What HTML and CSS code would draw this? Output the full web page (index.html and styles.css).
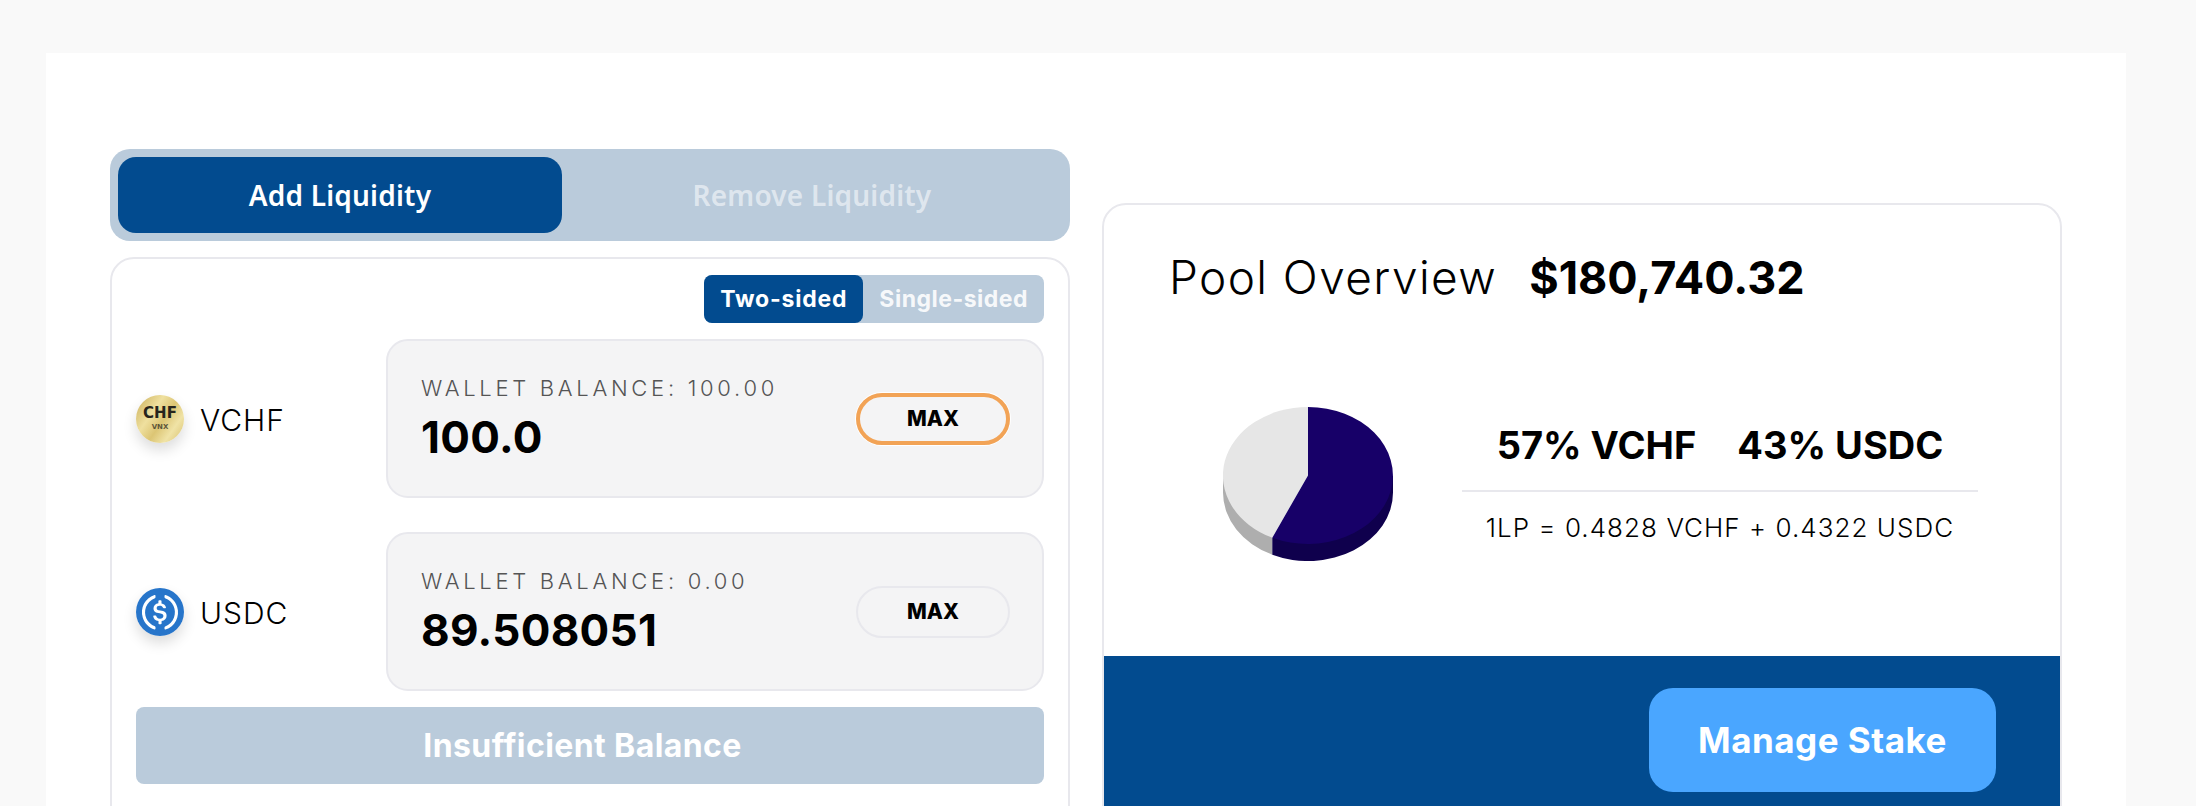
FILE: index.html
```html
<!DOCTYPE html>
<html lang="en">
<head>
<meta charset="utf-8">
<title>Pool</title>
<link rel="stylesheet" href="styles.css">
</head>
<body>
<main class="sheet">
  <section class="left">
    <div class="tabs">
      <div class="tab tab-on">Add Liquidity</div>
      <div class="tab tab-off">Remove Liquidity</div>
    </div>
    <div class="panel">
      <div class="mode-row">
        <div class="mode">
          <div class="mode-item mode-on">Two-sided</div>
          <div class="mode-item mode-off">Single-sided</div>
        </div>
      </div>
      <div class="token-row">
        <div class="token">
          <div class="coin coin-chf"><span class="chf">CHF</span><span class="vnx">VNX</span></div>
          <span class="token-name">VCHF</span>
        </div>
        <div class="box">
          <div class="box-text">
            <div class="label">WALLET BALANCE: 100.00</div>
            <div class="value">100.0</div>
          </div>
          <button class="max max-on">MAX</button>
        </div>
      </div>
      <div class="token-row">
        <div class="token">
          <div class="coin coin-usdc">
            <svg class="usdc" viewBox="0 0 2000 2000" aria-hidden="true">
              <circle cx="1000" cy="1000" r="1000" fill="#2775ca"/>
              <path fill="#fff" d="M1275 1158.33c0-145.83-87.5-195.83-262.5-216.66-125-16.67-150-50-150-108.34s41.67-95.83 125-95.83c75 0 116.67 25 137.5 87.5 4.17 12.5 16.67 20.83 29.17 20.83h66.66c16.67 0 29.17-12.5 29.17-29.16v-4.17c-16.67-91.67-91.67-162.5-187.5-170.83v-100c0-16.67-12.5-29.17-33.33-33.34h-62.5c-16.67 0-29.17 12.5-33.34 33.34v95.83c-125 16.67-204.16 100-204.16 204.17 0 137.5 83.33 191.66 258.33 212.5 116.67 20.83 154.17 45.83 154.17 112.5s-58.34 112.5-137.5 112.5c-108.34 0-145.84-45.84-158.34-108.34-4.16-16.66-16.66-25-29.16-25h-70.84c-16.66 0-29.16 12.5-29.16 29.17v4.17c16.66 104.16 83.33 179.16 220.83 200v100c0 16.66 12.5 29.16 33.33 33.33h62.5c16.67 0 29.17-12.5 33.34-33.33v-100c125-20.84 208.33-108.34 208.33-220.84z"/>
              <path fill="#fff" d="M787.5 1595.83c-325-116.66-491.67-479.16-370.83-800 62.5-175 200-308.33 370.83-370.83 16.67-8.33 25-20.83 25-41.67V325c0-16.67-8.33-29.17-25-33.33-4.17 0-12.5 0-16.67 4.16-395.83 125-612.5 545.84-487.5 941.67 75 233.33 254.17 412.5 487.5 487.5 16.67 8.33 33.34 0 37.5-16.67 4.17-4.16 4.17-8.33 4.17-16.66v-58.34c0-12.5-12.5-29.16-25-37.5zM1229.17 295.83c-16.67-8.33-33.34 0-37.5 16.67-4.17 4.17-4.17 8.33-4.17 16.67v58.33c0 16.67 12.5 33.33 25 41.67 325 116.66 491.67 479.16 370.83 800-62.5 175-200 308.33-370.83 370.83-16.67 8.33-25 20.83-25 41.67V1700c0 16.67 8.33 29.17 25 33.33 4.17 0 12.5 0 16.67-4.16 395.83-125 612.5-545.84 487.5-941.67-75-237.5-258.34-416.67-487.5-491.67z"/>
            </svg>
          </div>
          <span class="token-name">USDC</span>
        </div>
        <div class="box">
          <div class="box-text">
            <div class="label">WALLET BALANCE: 0.00</div>
            <div class="value">89.508051</div>
          </div>
          <button class="max">MAX</button>
        </div>
      </div>
      <button class="submit">Insufficient Balance</button>
    </div>
  </section>
  <section class="overview">
    <header class="ov-head">
      <span class="ov-title">Pool Overview</span>
      <span class="ov-total">$180,740.32</span>
    </header>
    <div class="ov-body">
      <svg class="pie" viewBox="0 0 170 154" aria-hidden="true">
        <path fill="#aeaeae" d="M0 68.5V85.5A85 68.5 0 0 0 49.3 147.7V130.7Z"/>
        <path fill="#0f004d" d="M49.3 130.7V147.7A85 68.5 0 0 0 170 85.5V68.5Z"/>
        <path fill="#e6e6e6" d="M85 68.5L49.3 130.7A85 68.5 0 0 1 85 0Z"/>
        <path fill="#170068" d="M85 68.5V0A85 68.5 0 1 1 49.3 130.7Z"/>
      </svg>
      <div class="stats">
        <div class="shares"><span>57% VCHF</span><span>43% USDC</span></div>
        <div class="rate">1LP = 0.4828 VCHF + 0.4322 USDC</div>
      </div>
    </div>
    <footer class="ov-foot">
      <button class="manage">Manage Stake</button>
    </footer>
  </section>
</main>
</body>
</html>
```
FILE: styles.css
```css
* { box-sizing: border-box; }
html, body { margin: 0; height: 806px; overflow: hidden; }
body {
  background: #f9f9f9;
  padding: 53px 70px 0 46px;
  font-family: Inter, "Liberation Sans", sans-serif;
  color: #000;
}
button { font-family: inherit; cursor: pointer; }

.sheet {
  display: flex;
  align-items: flex-start;
  gap: 32px;
  width: 2080px;
  height: 900px;
  padding: 96px 64px 0 64px;
  background: #fff;
}
.left { width: 960px; flex: none; display: flex; flex-direction: column; gap: 16px; }

.tabs {
  display: flex;
  height: 92px;
  padding: 8px;
  background: #bacbdb;
  border-radius: 20px;
}
.tab {
  display: flex;
  align-items: center;
  justify-content: center;
  font-family: "Noto Sans", sans-serif;
  font-size: 28px;
  font-weight: 600;
  letter-spacing: .2px;
}
.tab-on { width: 444px; flex: none; background: #024b8f; color: #fff; border-radius: 18px; }
.tab-off { flex: 1; color: rgba(255, 255, 255, .55); }

.panel {
  display: flex;
  flex-direction: column;
  padding: 16px 24px 60px;
  border: 2px solid #e8e8ed;
  border-radius: 24px;
}
.mode-row { display: flex; justify-content: flex-end; margin-bottom: 16px; }
.mode { display: flex; height: 48px; background: #bacbdb; border-radius: 8px; }
.mode-item {
  display: flex;
  align-items: center;
  padding: 0 16px;
  font-size: 23px;
  font-weight: 700;
  letter-spacing: .8px;
  color: #fff;
}
.mode-on { background: #024b8f; border-radius: 8px; }
.mode-off { color: rgba(255, 255, 255, .9); letter-spacing: .5px; }

.token-row { display: flex; align-items: center; margin-bottom: 34px; }
.token-row + .token-row { margin-bottom: 16px; }
.token { width: 250px; flex: none; display: flex; align-items: center; gap: 16px; }
.coin {
  width: 48px;
  height: 48px;
  flex: none;
  border-radius: 50%;
  box-shadow: 0 7px 14px rgba(0, 0, 0, .14);
}
.coin-chf {
  display: flex;
  flex-direction: column;
  align-items: center;
  justify-content: center;
  background: linear-gradient(125deg, #c9ad58 0%, #efe09f 35%, #dcc574 55%, #f0e3a6 75%, #d7bf6c 100%);
  color: #26241c;
  font-family: "DejaVu Sans", sans-serif;
  font-weight: 700;
}
.chf { font-size: 15px; line-height: 14px; }
.vnx { font-size: 7px; line-height: 8px; margin-top: 3px; opacity: .7; }
.usdc { display: block; width: 48px; height: 48px; }
.token-name { font-size: 30px; font-weight: 300; letter-spacing: 1px; margin-top: 3px; }

.box {
  flex: 1;
  height: 159px;
  display: flex;
  align-items: center;
  justify-content: space-between;
  padding: 0 32px 0 33px;
  background: #f4f4f5;
  border: 2px solid #e8e8ed;
  border-radius: 22px;
}
.label { font-size: 22px; line-height: 26px; font-weight: 300; letter-spacing: 3.7px; color: #555; }
.value { font-size: 44px; line-height: 52px; font-weight: 700; letter-spacing: .3px; margin-top: 10px; }
.max {
  width: 154px;
  height: 52px;
  padding: 0;
  background: transparent;
  border: 2px solid #e8e8ed;
  border-radius: 26px;
  font-size: 21px;
  font-weight: 800;
  color: #000;
}
.max-on { border: 4px solid #f2a356; box-shadow: 0 0 0 1px #fff; }

.submit {
  height: 77px;
  padding: 0 15px 0 0;
  border: 0;
  border-radius: 8px;
  background: #bacbdb;
  color: #fff;
  font-size: 32px;
  font-weight: 700;
  letter-spacing: .4px;
}

.overview {
  width: 960px;
  flex: none;
  margin-top: 54px;
  height: 700px;
  display: flex;
  flex-direction: column;
  border: 2px solid #e8e8ed;
  border-radius: 24px 24px 0 0;
  overflow: hidden;
}
.ov-head {
  display: flex;
  align-items: center;
  gap: 32px;
  height: 102px;
  padding: 42px 0 0 65px;
}
.ov-title { font-size: 46px; font-weight: 300; letter-spacing: 1.4px; }
.ov-total { font-size: 45px; font-weight: 700; }
.ov-body {
  height: 349px;
  flex: none;
  display: flex;
  align-items: center;
  padding-left: 119px;
  gap: 69px;
}
.pie { display: block; width: 170px; height: 154px; flex: none; margin-top: 5px; }
.stats { width: 516px; flex: none; margin-top: -4px; }
.shares {
  display: flex;
  justify-content: center;
  gap: 41px;
  height: 76px;
  padding-top: 7px;
  border-bottom: 2px solid #e8e8ed;
  font-size: 38px;
  line-height: 44px;
  font-weight: 700;
}
.rate { text-align: center; padding-top: 20px; font-size: 26px; line-height: 32px; font-weight: 300; letter-spacing: 1.05px; }
.ov-foot {
  flex: 1;
  display: flex;
  justify-content: flex-end;
  align-items: flex-start;
  padding: 32px 64px 0 0;
  background: #024b8f;
}
.manage {
  width: 347px;
  height: 104px;
  padding: 0;
  border: 0;
  border-radius: 24px;
  background: #4aa6ff;
  color: #fff;
  font-size: 35px;
  font-weight: 700;
  letter-spacing: .5px;
}
```
